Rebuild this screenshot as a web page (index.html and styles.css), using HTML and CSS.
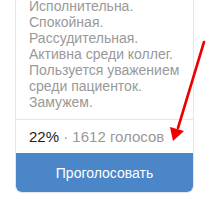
FILE: index.html
```html
<!DOCTYPE html>
<html lang="ru">
<head>
<meta charset="utf-8">
<link rel="stylesheet" href="styles.css">
</head>
<body>
<div class="page">
  <div class="card">
    <div class="desc">Исполнительна.<br>Спокойная.<br>Рассудительная.<br>Активна среди коллег.<br>Пользуется уважением<br>среди пациенток.<br>Замужем.</div>
    <div class="stats"><span class="pct">22%</span> · 1612 голосов</div>
    <button class="vote">Проголосовать</button>
  </div>
  <svg class="arrow" width="212" height="202" viewBox="0 0 212 202">
    <line x1="204" y1="42" x2="178" y2="128" stroke="#ee0000" stroke-width="2.6" stroke-linecap="round"/>
    <polygon points="173,141 170,127 184,131" fill="#ee0000"/>
  </svg>
</div>
</body>
</html>
```
FILE: styles.css
```css
html, body {
  margin: 0;
  padding: 0;
  background: #ffffff;
}
.page {
  position: relative;
  width: 212px;
  height: 202px;
  overflow: hidden;
  font-family: "Liberation Sans", Arial, sans-serif;
}
.card {
  margin: -20px 0 0 15px;
  width: 177px;
  border: 1px solid #e6e6e6;
  border-radius: 7px;
  overflow: hidden;
  background: #fff;
  display: flex;
  flex-direction: column;
}
.desc {
  padding: 17px 4px 9px 13px;
  font-size: 14px;
  line-height: 16px;
  color: #999999;
  white-space: nowrap;
}
.stats {
  border-top: 1px solid #e6e6e6;
  height: 33px;
  display: flex;
  align-items: center;
  padding: 0 13px;
  font-size: 15px;
  color: #999999;
  white-space: pre;
}
.pct {
  color: #222222;
}
.vote {
  height: 39px;
  border: 0;
  margin: 0;
  background: #4a86c8;
  color: #ffffff;
  font-family: "Liberation Sans", Arial, sans-serif;
  font-size: 14px;
  cursor: pointer;
}
.arrow {
  position: absolute;
  left: 0;
  top: 0;
  pointer-events: none;
}
```
